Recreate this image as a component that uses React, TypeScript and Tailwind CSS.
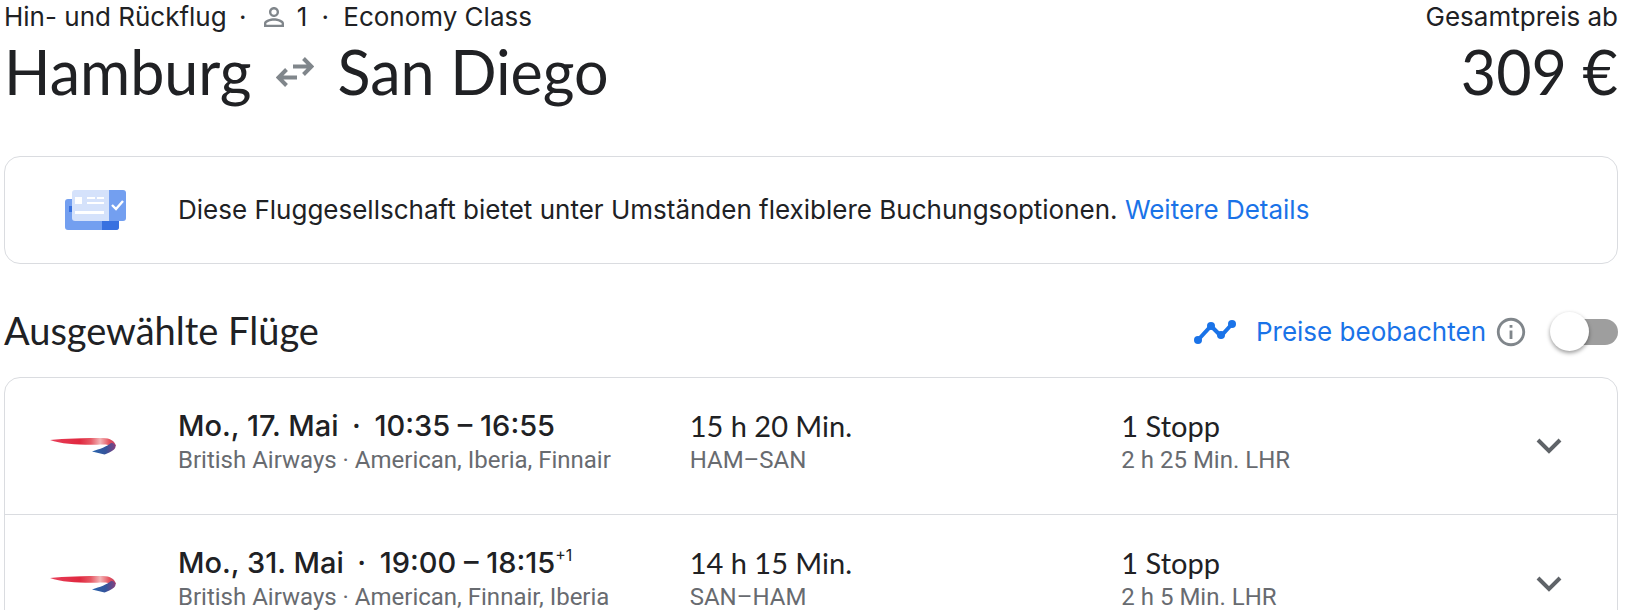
import { MdInfoOutline, MdPersonOutline } from 'react-icons/md';

type Flight = {
  date: string;
  time: string;
  plusDays?: string;
  airlines: string;
  duration: string;
  route: string;
  stops: string;
  layover: string;
};

const flights: Flight[] = [
  {
    date: 'Mo., 17. Mai',
    time: '10:35 – 16:55',
    airlines: 'British Airways · American, Iberia, Finnair',
    duration: '15 h 20 Min.',
    route: 'HAM–SAN',
    stops: '1 Stopp',
    layover: '2 h 25 Min. LHR',
  },
  {
    date: 'Mo., 31. Mai',
    time: '19:00 – 18:15',
    plusDays: '+1',
    airlines: 'British Airways · American, Finnair, Iberia',
    duration: '14 h 15 Min.',
    route: 'SAN–HAM',
    stops: '1 Stopp',
    layover: '2 h 5 Min. LHR',
  },
];

function RoundTripIcon() {
  return (
    <svg width="38" height="30" viewBox="0 0 38 30" fill="none" stroke="#80868b" strokeWidth="4" aria-hidden="true">
      <path d="M17 9.5h18M27.5 1.5l8 8-8 8" />
      <path d="M21 20.5H3M10.5 12.5l-8 8 8 8" />
    </svg>
  );
}

function TicketIcon() {
  return (
    <svg width="62" height="40" viewBox="0 0 62 40" aria-hidden="true">
      <rect x="0" y="9" width="54" height="31" rx="3" fill="#739ff0" />
      <path d="M37 31h17v6a3 3 0 0 1-3 3H37z" fill="#3871e0" />
      <path d="M4 16h3v6H4z" fill="#3871e0" />
      <path d="M10 0h34v31H10a3 3 0 0 1-3-3V3a3 3 0 0 1 3-3z" fill="#d5e2fb" />
      <path d="M44 0h14a3 3 0 0 1 3 3v25a3 3 0 0 1-3 3H44z" fill="#739ff0" />
      <path d="M10 7h7v7h-7zM22 7h8v2h-8zM32 7h7v2h-7zM22 12h17v2H22zM10 21h29v3H10z" fill="#fff" />
      <path d="M47 15l4 4 7-8" fill="none" stroke="#fff" strokeWidth="2.4" />
    </svg>
  );
}

function AirlineLogo() {
  return (
    <svg width="66" height="18" viewBox="0 0 66 18" role="img" aria-label="British Airways">
      <defs>
        <linearGradient id="ribbon-red" x1="0" x2="1" y1="0" y2="0">
          <stop offset="0" stopColor="#e8405a" />
          <stop offset="0.45" stopColor="#e0283f" />
          <stop offset="0.62" stopColor="#e65a66" />
          <stop offset="0.76" stopColor="#f3b6b8" />
          <stop offset="0.9" stopColor="#e5505c" />
          <stop offset="1" stopColor="#b8406a" />
        </linearGradient>
        <linearGradient id="ribbon-blue" x1="0" x2="1" y1="0" y2="0">
          <stop offset="0" stopColor="#2765ad" />
          <stop offset="0.6" stopColor="#36549b" />
          <stop offset="1" stopColor="#84407f" />
        </linearGradient>
      </defs>
      <path d="M0 3C14 1.500 36 1 53 1c7 0 12 3 13 8l-5 1c-1-2-4-2.500-8-2.500C38 8 13 8 0 3z" fill="url(#ribbon-red)" />
      <path d="M42 14.500c8-2.500 15-5 19-8.500 3 0 5 2 4.500 4C65 13.500 58 16 54.500 17.500z" fill="url(#ribbon-blue)" />
    </svg>
  );
}

function TrendIcon() {
  return (
    <svg width="42" height="24" viewBox="0 0 42 24" fill="#1a73e8" aria-hidden="true">
      <path d="M4 20L17 6l10 10L38 4" fill="none" stroke="#1a73e8" strokeWidth="4" />
      <circle cx="4" cy="20" r="4" />
      <circle cx="17" cy="6" r="4" />
      <circle cx="27" cy="15" r="4" />
      <circle cx="38" cy="4" r="4" />
    </svg>
  );
}

function FlightRow({ flight }: { flight: Flight }) {
  return (
    <li className="grid h-[137px] grid-cols-[173px_32fr_27fr_31fr] border-b border-[#dadce0] last:border-b-0">
      <div className="flex items-center pl-[45px]">
        <AirlineLogo />
      </div>
      <div className="pt-[30px]">
        <p className="flex font-['Inter',sans-serif] text-[29px] leading-9 font-medium">
          <span>{flight.date}</span>
          <span className="w-9 text-center">·</span>
          <span>{flight.time}</span>
          {flight.plusDays && <sup className="top-0 text-base leading-5 font-normal">{flight.plusDays}</sup>}
        </p>
        <p className="font-['Roboto',sans-serif] text-2xl leading-8 text-[#686b70]">{flight.airlines}</p>
      </div>
      <div className="pt-[30px]">
        <p className="text-[29px] leading-9">{flight.duration}</p>
        <p className="font-['Roboto',sans-serif] text-2xl leading-8 text-[#686b70]">{flight.route}</p>
      </div>
      <div className="flex justify-between">
        <div className="pt-[30px]">
          <p className="text-[29px] leading-9">{flight.stops}</p>
          <p className="font-['Roboto',sans-serif] text-2xl leading-8 text-[#686b70]">{flight.layover}</p>
        </div>
        <button type="button" aria-label="Flugdetails" className="mr-12 flex w-10 items-center justify-center">
          <svg width="26" height="16" viewBox="0 0 26 16" fill="none" stroke="#5f6368" strokeWidth="4" aria-hidden="true">
            <path d="M2 2l11 11L24 2" />
          </svg>
        </button>
      </div>
    </li>
  );
}

export default function App() {
  return (
    <main className="h-screen overflow-hidden bg-white pr-[10px] pl-1 font-['Lato',sans-serif] text-[#202124]">
      {/* Trip summary */}
      <header className="flex justify-between">
        <div>
          <div className="flex items-center font-['Inter',sans-serif] text-[26px] leading-[34px]">
            <span>Hin- und Rückflug</span>
            <span className="w-8 text-center">·</span>
            <MdPersonOutline className="mr-2 size-[30px] text-[#80868b]" />
            <span>1</span>
            <span className="w-9 text-center">·</span>
            <span>Economy Class</span>
          </div>
          <h1 className="flex items-center gap-6 text-[61px] leading-[76px]">
            Hamburg
            <RoundTripIcon />
            San Diego
          </h1>
        </div>
        <div className="text-right">
          <p className="font-['Inter',sans-serif] text-[26px] leading-[34px]">Gesamtpreis ab</p>
          <p className="text-[61px] leading-[76px]">309 €</p>
        </div>
      </header>

      {/* Booking hint */}
      <section className="mt-[46px] flex h-[108px] items-center rounded-2xl border border-[#dadce0]">
        <div className="w-[173px] pl-15">
          <TicketIcon />
        </div>
        <p className="font-['Inter',sans-serif] text-[26px] leading-9">
          Diese Fluggesellschaft bietet unter Umständen flexiblere Buchungsoptionen.{' '}
          <a href="#details" className="text-[#1a73e8]">Weitere Details</a>
        </p>
      </section>

      {/* Selected flights */}
      <section>
        <div className="mt-12 mb-[25px] flex h-10 items-center justify-between">
          <h2 className="pb-1 text-[38px] leading-9">Ausgewählte Flüge</h2>
          <div className="flex items-center">
            <TrendIcon />
            <label htmlFor="track-prices" className="ml-5 font-['Inter',sans-serif] text-[26px] leading-8 text-[#1a73e8]">
              Preise beobachten
            </label>
            <button type="button" aria-label="Informationen" className="ml-2">
              <MdInfoOutline className="size-[34px] text-[#80868b]" />
            </button>
            <input
              id="track-prices"
              type="checkbox"
              role="switch"
              className="relative ml-6 h-[26px] w-[66px] appearance-none rounded-full bg-[#9e9e9e] before:absolute before:-top-[7px] before:-left-[2px] before:size-[39px] before:rounded-full before:bg-white before:shadow-[0_2px_4px_rgba(0,0,0,0.4)] checked:bg-[#8ab4f8] checked:before:left-[30px]"
            />
          </div>
        </div>
        <ul className="rounded-2xl border border-[#dadce0]">
          {flights.map((flight) => (
            <FlightRow key={flight.date} flight={flight} />
          ))}
        </ul>
      </section>
    </main>
  );
}
